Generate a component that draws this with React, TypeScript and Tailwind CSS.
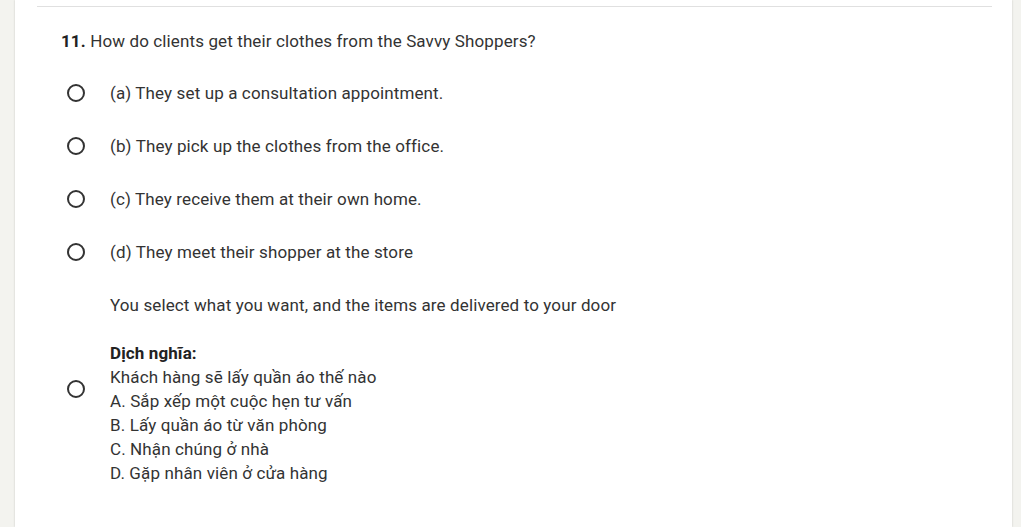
import React from "react";

const Radio = () => (
  <span className="block w-[18px] h-[18px] rounded-full border-2 border-[#333] shrink-0" />
);

const options = [
  "(a) They set up a consultation appointment.",
  "(b) They pick up the clothes from the office.",
  "(c) They receive them at their own home.",
  "(d) They meet their shopper at the store",
];

export default function App() {
  return (
    <div
      className="w-[1021px] h-[527px] bg-[#f3f3ef] flex overflow-hidden text-[#333] text-[17px] tracking-[0.12px] leading-[24px]"
      style={{ fontFamily: "Roboto, 'Noto Sans', sans-serif" }}
    >
      <div className="ml-[15px] mr-[9px] flex-1 bg-white shadow-[0_0_2px_rgba(0,0,0,0.18)] pl-[22px] pr-[20px]">
        <div className="mt-[6px] border-t border-[#e0e0e0]" />
        <div className="pl-[24px] mt-[22px]">
          <span className="font-bold text-[#222]">11.</span> How do clients get their clothes from the Savvy Shoppers?
        </div>
        <div className="flex flex-col gap-[29px] mt-[28px] pl-[30px]">
          {options.map((o) => (
            <div key={o} className="flex items-center">
              <Radio />
              <div className="ml-[25px]">{o}</div>
            </div>
          ))}
          <div className="flex items-center">
            <Radio />
            <div className="ml-[25px]">
              <div>You select what you want, and the items are delivered to your door</div>
              <div className="h-[24px]" />
              <div className="font-bold text-[#222]">Dịch nghĩa:</div>
              <div>Khách hàng sẽ lấy quần áo thế nào</div>
              <div>A. Sắp xếp một cuộc hẹn tư vấn</div>
              <div>B. Lấy quần áo từ văn phòng</div>
              <div>C. Nhận chúng ở nhà</div>
              <div>D. Gặp nhân viên ở cửa hàng</div>
            </div>
          </div>
        </div>
      </div>
    </div>
  );
}
